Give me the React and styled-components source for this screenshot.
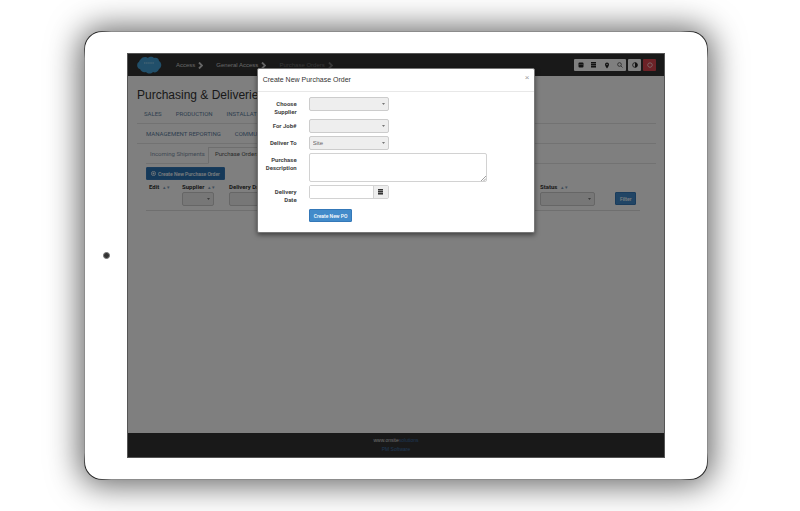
import React from "react";
import styled, { createGlobalStyle, css } from "styled-components";

const GlobalStyle = createGlobalStyle`
  *, *::before, *::after { box-sizing: border-box; }
  body {
    margin: 0;
    background: #fff;
    color: #333;
    font: 6px/8px "Liberation Sans", Arial, sans-serif;
  }
  button, input, select, textarea { font: inherit; color: inherit; margin: 0; }
  a { color: inherit; text-decoration: none; }
`;

const Stage = styled.main`
  display: flex;
  min-height: 100vh;
  padding: 31px 92px 31px 84px;
`;

const Tablet = styled.div`
  flex: 1;
  min-width: 0;
  display: grid;
  grid-template-columns: 42px minmax(0, 1fr) 42px;
  padding: 21px 0;
  border: 1px solid transparent;
  border-radius: 18px;
  background:
    linear-gradient(#fff, #fff) padding-box,
    radial-gradient(circle at 6px 6px, #222 8px, transparent 22px) border-box,
    radial-gradient(circle at calc(100% - 6px) 6px, #222 8px, transparent 22px) border-box,
    radial-gradient(circle at 6px calc(100% - 6px), #222 8px, transparent 22px) border-box,
    radial-gradient(circle at calc(100% - 6px) calc(100% - 6px), #222 8px, transparent 22px) border-box,
    linear-gradient(#8c8c8c, #8c8c8c) border-box;
  box-shadow: 0 1px 32px 4px rgba(0, 0, 0, 0.62);
`;

const Camera = styled.span`
  place-self: center;
  width: 7px;
  height: 7px;
  border: 1px solid #777;
  border-radius: 50%;
  background: #333;
`;

const Screen = styled.div`
  position: relative;
  display: flex;
  flex-direction: column;
  border: 1px solid #555;
  background: #fff;
`;

const Navbar = styled.header`
  display: flex;
  align-items: center;
  height: 22px;
  padding: 0 8px;
  background: #333;
`;

const NavLinks = styled.nav`
  display: flex;
  flex: 1;
  gap: 13px;
  margin-left: 14px;
`;

const NavLink = styled.a`
  display: flex;
  align-items: center;
  gap: 3px;
  color: ${(p) => (p.$dim ? "#707070" : "#ccc")};
`;

const Toolbar = styled.div`
  display: flex;
  gap: 2px;
`;

const ToolGroup = styled.div`
  display: flex;
  border-radius: 1px;
  overflow: hidden;
`;

const ToolButton = styled.button`
  display: grid;
  place-items: center;
  width: 13px;
  height: 12px;
  padding: 0;
  border: 0;
  background: ${(p) => (p.$danger ? "#d9444f" : "#fff")};
  color: ${(p) => (p.$danger ? "#fff" : "#222")};
`;

const Content = styled.div`
  flex: 1;
  padding: 11px 8px 0 9px;
`;

const PageTitle = styled.h1`
  margin: 0 0 1px;
  font-size: 12px;
  line-height: 16px;
  font-weight: 400;
`;

const Tabs = styled.nav`
  display: flex;
  height: 20px;
  gap: ${(p) => p.$gap};
  padding-left: ${(p) => p.$indent};
  margin-left: ${(p) => p.$inset || "0"};
  border-bottom: 1px solid #e4e4e4;
  font-family: Roboto, "Liberation Sans", sans-serif;
`;

const Tab = styled.a`
  display: flex;
  align-items: center;
  color: ${(p) => (p.$active ? "#555" : p.$muted ? "#8294a8" : "#5c7d9e")};
  ${(p) =>
    p.$active &&
    css`
      margin: 3px 0 -1px;
      padding: 0 6px 3px;
      border: 1px solid #ddd;
      border-bottom-color: #fff;
    `}
`;

const Button = styled.button`
  display: inline-flex;
  align-items: center;
  justify-content: center;
  gap: 2px;
  height: 13px;
  padding: 0 4px;
  border: 1px solid #3478b8;
  border-radius: 1px;
  background: ${(p) => (p.$deep ? "#2a72b2" : "#428bca")};
  color: #fff;
  font-family: Roboto, "Liberation Sans", sans-serif;
  font-size: 5px;
  font-weight: 500;
  line-height: 8px;
  white-space: nowrap;
`;

const Listing = styled.section`
  margin: 3px 16px 0 9px;
`;

const Table = styled.table`
  width: 100%;
  margin-top: 2px;
  table-layout: fixed;
  border-collapse: collapse;
  border-bottom: 1px solid #dedede;
`;

const Col = styled.col`
  width: ${(p) => p.$width};
`;

const Th = styled.th`
  height: 9px;
  padding: 0 0 0 3px;
  text-align: left;
  white-space: nowrap;
  font-family: Roboto, "Liberation Sans", sans-serif;
`;

const Sort = styled.span`
  margin-left: 2px;
  color: #819bb5;
  font-size: 5px;
  font-weight: 400;
`;

const Td = styled.td`
  height: 19px;
  padding: 0 0 3px 3px;
`;

const SelectBox = styled.span`
  display: grid;
  align-items: center;
  width: ${(p) => p.$width};
  > * { grid-area: 1 / 1; }
  svg { justify-self: end; margin-right: 4px; pointer-events: none; }
`;

const Select = styled.select`
  appearance: none;
  width: 100%;
  height: 14px;
  padding: 0 12px 0 3px;
  border: 1px solid #ccc;
  border-radius: 2px;
  background: #eee;
  color: #666;
`;

const Footer = styled.footer`
  display: flex;
  flex-direction: column;
  align-items: center;
  height: 24px;
  padding-top: 3px;
  background: #333;
  color: #ddd;
  font-size: 5px;
  line-height: 9px;
`;

const FooterLink = styled.a`
  color: #3c6fa8;
`;

const Overlay = styled.div`
  position: absolute;
  inset: 0;
  display: flex;
  justify-content: center;
  align-items: flex-start;
  padding-top: 14px;
  background: rgba(0, 0, 0, 0.5);
`;

const Dialog = styled.section`
  width: 52%;
  border: 1px solid #777;
  border-radius: 2px;
  background: #fff;
  box-shadow: 0 2px 5px rgba(0, 0, 0, 0.5);
`;

const DialogHeader = styled.header`
  display: flex;
  justify-content: space-between;
  align-items: center;
  height: 23px;
  padding: 0 5px;
  border-bottom: 1px solid #e8e8e8;
`;

const DialogTitle = styled.h2`
  margin: 0;
  font-size: 7px;
  line-height: 10px;
  font-weight: 400;
`;

const Close = styled.button`
  align-self: flex-start;
  margin-top: 5px;
  padding: 0;
  border: 0;
  background: none;
  color: #999;
  font-size: 8px;
  line-height: 8px;
`;

const Form = styled.form`
  display: grid;
  gap: 3px;
  padding: 5px 47px 10px 5px;
`;

const Field = styled.div`
  display: grid;
  grid-template-columns: 34px minmax(0, 1fr);
  column-gap: 12px;
  align-items: start;
`;

const Label = styled.label`
  padding-top: 3px;
  text-align: right;
  font-family: Roboto, "Liberation Sans", sans-serif;
  font-weight: 700;
  color: #444;
`;

const TextArea = styled.textarea`
  display: block;
  width: 100%;
  height: 29px;
  padding: 3px;
  border: 1px solid #d2d2d2;
  border-radius: 2px;
  resize: none;
  grid-area: 1 / 1;
`;

const TextAreaBox = styled.div`
  display: grid;
  svg { grid-area: 1 / 1; place-self: end; margin: 1px; }
`;

const DateGroup = styled.div`
  display: flex;
  width: 80px;
  height: 14px;
  border: 1px solid #d2d2d2;
  border-radius: 2px;
`;

const DateInput = styled.input`
  flex: 1;
  min-width: 0;
  padding: 0 3px;
  border: 0;
  background: #fff;
`;

const DateButton = styled.button`
  display: grid;
  place-items: center;
  width: 15px;
  padding: 0;
  border: 0;
  border-left: 1px solid #d2d2d2;
  background: #eee;
`;

const Actions = styled.div`
  margin: 2px 0 0 46px;
`;

const Caret = () => (
  <svg width="3" height="2" viewBox="0 0 6 4" aria-hidden="true">
    <path d="M0 0h6L3 4z" fill="#777" />
  </svg>
);

const Chevron = () => (
  <svg width="5" height="7" viewBox="0 0 5 7" fill="none" stroke="currentColor" strokeWidth="1.8" aria-hidden="true">
    <path d="M1 .5 4 3.5 1 6.5" />
  </svg>
);

const Logo = () => (
  <svg width="26" height="18" viewBox="0 0 26 18" role="img" aria-label="Cloud logo">
    <path
      d="M5 3C6 1 10 0 12 2c2-2 5-1 6 0 3-1 5 1 5 3 3 2 3 6 0 8-1 3-4 4-6 3-2 2-5 2-7 0-3 1-5-1-6-3C1 13 0 7 3 6c0-1 1-2 2-3z"
      fill="#429fd4"
    />
    <path d="M8 7h10" stroke="#83c3e6" strokeWidth="1.4" strokeDasharray="1.5 .6" />
  </svg>
);

const ListIcon = () => (
  <svg width="5" height="6" viewBox="0 0 5 6" aria-hidden="true">
    <path d="M0 0h5v6H0z" fill="currentColor" fillOpacity=".55" />
    <path d="M0 .5h5M0 2.5h5M0 4.5h5" stroke="currentColor" strokeWidth="1" />
  </svg>
);

const BriefcaseIcon = () => (
  <svg width="6" height="6" viewBox="0 0 12 12" aria-hidden="true">
    <rect x="1" y="1" width="10" height="10" rx="2" fill="currentColor" />
    <path d="M2 5h8" stroke="#aaa" />
  </svg>
);

const PinIcon = () => (
  <svg width="6" height="7" viewBox="0 0 12 14" aria-hidden="true">
    <path d="M6 1a4 4 0 0 0-4 4c0 3 4 8 4 8s4-5 4-8a4 4 0 0 0-4-4z" fill="currentColor" />
    <circle cx="6" cy="5" r="1.5" fill="#ddd" />
  </svg>
);

const SearchIcon = () => (
  <svg width="6" height="6" viewBox="0 0 12 12" fill="none" stroke="currentColor" strokeWidth="1.3" aria-hidden="true">
    <circle cx="5" cy="5" r="3.7" />
    <path d="m8 8 3 3" />
  </svg>
);

const ContrastIcon = () => (
  <svg width="6" height="6" viewBox="0 0 12 12" aria-hidden="true">
    <circle cx="6" cy="6" r="4.7" fill="none" stroke="currentColor" strokeWidth="1.6" />
    <path d="M6 1a5 5 0 0 1 0 10z" fill="currentColor" />
  </svg>
);

const PowerIcon = () => (
  <svg width="6" height="6" viewBox="0 0 12 12" fill="none" stroke="currentColor" strokeWidth="1.4" aria-hidden="true">
    <path d="M4 2a4.5 4.5 0 1 0 4 0M4 2h4" />
  </svg>
);

const PlusIcon = () => (
  <svg width="5" height="5" viewBox="0 0 10 10" fill="none" stroke="currentColor" strokeWidth="1.5" aria-hidden="true">
    <circle cx="5" cy="5" r="4.2" />
    <path d="M5 3v4M3 5h4" />
  </svg>
);

const Grip = () => (
  <svg width="5" height="5" viewBox="0 0 5 5" stroke="#888" strokeWidth=".8" aria-hidden="true">
    <path d="M0 5 5 0M2.5 5 5 2.5" />
  </svg>
);

const Dropdown = ({ width, children, ...rest }) => (
  <SelectBox $width={width}>
    <Select {...rest}>{children || <option value="" />}</Select>
    <Caret />
  </SelectBox>
);

const Heading = ({ children }) => (
  <Th scope="col">
    {children}
    <Sort aria-hidden="true"> ▴ ▾</Sort>
  </Th>
);

export default function App() {
  return (
    <>
      <GlobalStyle />
      <Stage>
        <Tablet>
          <Camera />
          <Screen>
            <Navbar>
              <Logo />
              <NavLinks aria-label="Main">
                <NavLink href="#access">Access <Chevron /></NavLink>
                <NavLink href="#general">General Access <Chevron /></NavLink>
                <NavLink href="#orders" $dim>Purchase Orders <Chevron /></NavLink>
              </NavLinks>
              <Toolbar>
                <ToolGroup>
                  <ToolButton aria-label="Jobs"><BriefcaseIcon /></ToolButton>
                  <ToolButton aria-label="Calendar"><ListIcon /></ToolButton>
                  <ToolButton aria-label="Map"><PinIcon /></ToolButton>
                  <ToolButton aria-label="Search"><SearchIcon /></ToolButton>
                </ToolGroup>
                <ToolGroup>
                  <ToolButton aria-label="Contrast"><ContrastIcon /></ToolButton>
                </ToolGroup>
                <ToolGroup>
                  <ToolButton $danger aria-label="Log out"><PowerIcon /></ToolButton>
                </ToolGroup>
              </Toolbar>
            </Navbar>

            <Content>
              <PageTitle>Purchasing &amp; Deliveries</PageTitle>
              <Tabs $gap="14px" $indent="7px" aria-label="Departments">
                <Tab href="#sales">SALES</Tab>
                <Tab href="#production">PRODUCTION</Tab>
                <Tab href="#installation">INSTALLATION</Tab>
              </Tabs>
              <Tabs $gap="14px" $indent="9px" aria-label="Reports">
                <Tab href="#reporting">MANAGEMENT REPORTING</Tab>
                <Tab href="#communication">COMMUNICATION</Tab>
              </Tabs>
              <Tabs $gap="3px" $indent="4px" $inset="9px" aria-label="Purchasing">
                <Tab href="#shipments" $muted>Incoming Shipments</Tab>
                <Tab href="#purchase-orders" $active>Purchase Orders</Tab>
              </Tabs>

              <Listing>
                <Button $deep><PlusIcon />Create New Purchase Order</Button>
                <Table>
                  <colgroup>
                    <Col $width="33px" />
                    <Col $width="47px" />
                    <Col />
                    <Col $width="75px" />
                    <Col $width="28px" />
                  </colgroup>
                  <thead>
                    <tr>
                      <Heading>Edit</Heading>
                      <Heading>Supplier</Heading>
                      <Heading>Delivery Date</Heading>
                      <Heading>Status</Heading>
                      <Th />
                    </tr>
                  </thead>
                  <tbody>
                    <tr>
                      <Td />
                      <Td><Dropdown width="32px" aria-label="Supplier" /></Td>
                      <Td><Dropdown width="40px" aria-label="Delivery Date" /></Td>
                      <Td><Dropdown width="55px" aria-label="Status" /></Td>
                      <Td><Button>Filter</Button></Td>
                    </tr>
                  </tbody>
                </Table>
              </Listing>
            </Content>

            <Footer>
              <span>www.onsite<FooterLink href="#site">solutions</FooterLink></span>
              <FooterLink href="#software">PM Software</FooterLink>
            </Footer>

            <Overlay>
              <Dialog role="dialog" aria-modal="true" aria-labelledby="dialog-title">
                <DialogHeader>
                  <DialogTitle id="dialog-title">Create New Purchase Order</DialogTitle>
                  <Close aria-label="Close">×</Close>
                </DialogHeader>
                <Form>
                  <Field>
                    <Label htmlFor="supplier">Choose Supplier</Label>
                    <Dropdown id="supplier" width="80px" />
                  </Field>
                  <Field>
                    <Label htmlFor="job">For Job#</Label>
                    <Dropdown id="job" width="80px" />
                  </Field>
                  <Field>
                    <Label htmlFor="deliver">Deliver To</Label>
                    <Dropdown id="deliver" width="80px"><option>Site</option></Dropdown>
                  </Field>
                  <Field>
                    <Label htmlFor="description">Purchase Description</Label>
                    <TextAreaBox><TextArea id="description" /><Grip /></TextAreaBox>
                  </Field>
                  <Field>
                    <Label htmlFor="date">Delivery Date</Label>
                    <DateGroup>
                      <DateInput id="date" type="text" />
                      <DateButton type="button" aria-label="Pick a date"><ListIcon /></DateButton>
                    </DateGroup>
                  </Field>
                  <Actions>
                    <Button type="button">Create New PO</Button>
                  </Actions>
                </Form>
              </Dialog>
            </Overlay>
          </Screen>
        </Tablet>
      </Stage>
    </>
  );
}
